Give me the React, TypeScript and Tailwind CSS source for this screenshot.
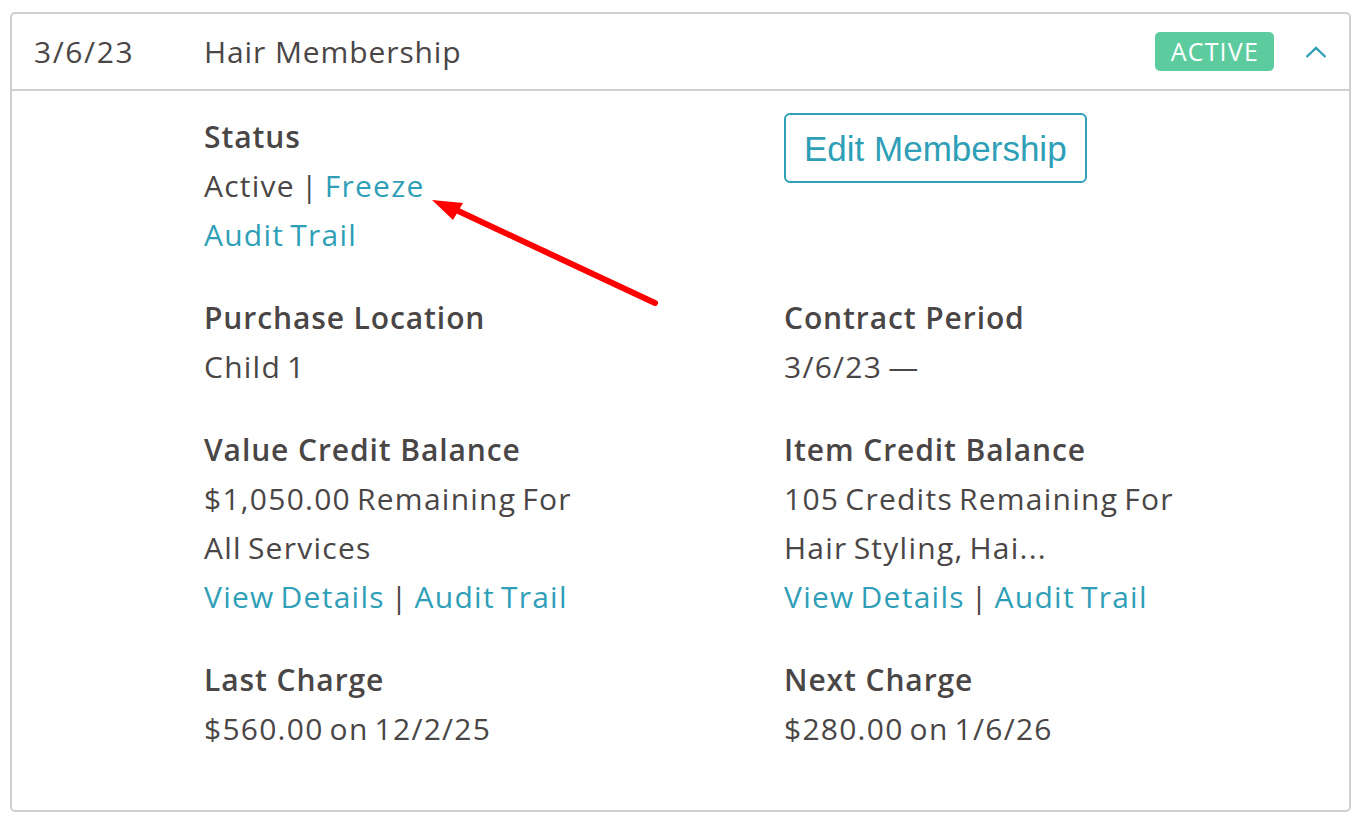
import React from "react";

const link = "text-[#2f9fb7]";

function Section({ label, children }: { label: string; children: React.ReactNode }) {
  return (
    <div className="flex flex-col">
      <div className="font-semibold text-[#4a4646] tracking-[0.9px] [word-spacing:0px]">{label}</div>
      {children}
    </div>
  );
}

export default function App() {
  return (
    <div className="w-[1359px] h-[820px] bg-white pt-[12px] pl-[10px]" style={{ fontFamily: "'Open Sans', 'Noto Sans', sans-serif" }}>
      <div className="relative w-[1341px] h-[800px] border-2 border-[#cfcfcf] rounded-[5px] flex flex-col">
        <div className="h-[77px] border-b-2 border-[#cfcfcf] flex items-center text-[30px] text-[#4a4646] pl-[22px] pr-[22px]">
          <div className="w-[170px] tracking-[1.6px]">3/6/23</div>
          <div className="flex-1 tracking-[0.9px]">Hair Membership</div>
          <div className="h-[39px] pl-[16px] pr-[15px] rounded-[5px] bg-[#5ccc9f] text-white text-[25px] tracking-[1.2px] flex items-center">ACTIVE</div>
          <svg className="ml-[31px]" width="22" height="12" viewBox="0 0 22 12" fill="none">
            <polyline points="1.5,11 11,2 20.5,11" stroke="#2f9fb7" strokeWidth="2.4" />
          </svg>
        </div>
        <div className="pl-[192px] pt-[21px] grid grid-cols-[580px_580px] gap-y-[34px] text-[30px] leading-[49px] tracking-[1.25px] [word-spacing:-3px] text-[#4a4646]">
          <Section label="Status">
            <div>
              Active | <span className={link}>Freeze</span>
            </div>
            <div className={link}>Audit Trail</div>
          </Section>
          <div className="pt-[1px] tracking-normal [word-spacing:0px]">
            <button
              className="h-[70px] px-[18px] border-2 border-[#2f9fb7] rounded-[6px] text-[#2f9fb7] text-[35px] leading-none"
              style={{ fontFamily: "'Liberation Sans', Arial, sans-serif" }}
            >
              Edit Membership
            </button>
          </div>
          <Section label="Purchase Location">
            <div>Child 1</div>
          </Section>
          <Section label="Contract Period">
            <div>3/6/23 —</div>
          </Section>
          <Section label="Value Credit Balance">
            <div>$1,050.00 Remaining For</div>
            <div>All Services</div>
            <div>
              <span className={link}>View Details</span> | <span className={link}>Audit Trail</span>
            </div>
          </Section>
          <Section label="Item Credit Balance">
            <div>105 Credits Remaining For</div>
            <div>Hair Styling, Hai...</div>
            <div>
              <span className={link}>View Details</span> | <span className={link}>Audit Trail</span>
            </div>
          </Section>
          <Section label="Last Charge">
            <div>$560.00 on 12/2/25</div>
          </Section>
          <Section label="Next Charge">
            <div>$280.00 on 1/6/26</div>
          </Section>
        </div>
        <svg className="absolute left-0 top-0 pointer-events-none" width="1341" height="800" viewBox="10 12 1341 800">
          <line x1="653" y1="301" x2="452" y2="207" stroke="#ff0000" strokeWidth="6" strokeLinecap="round" />
          <polygon points="430,198 461,201 451,218" fill="#ff0000" />
        </svg>
      </div>
    </div>
  );
}
